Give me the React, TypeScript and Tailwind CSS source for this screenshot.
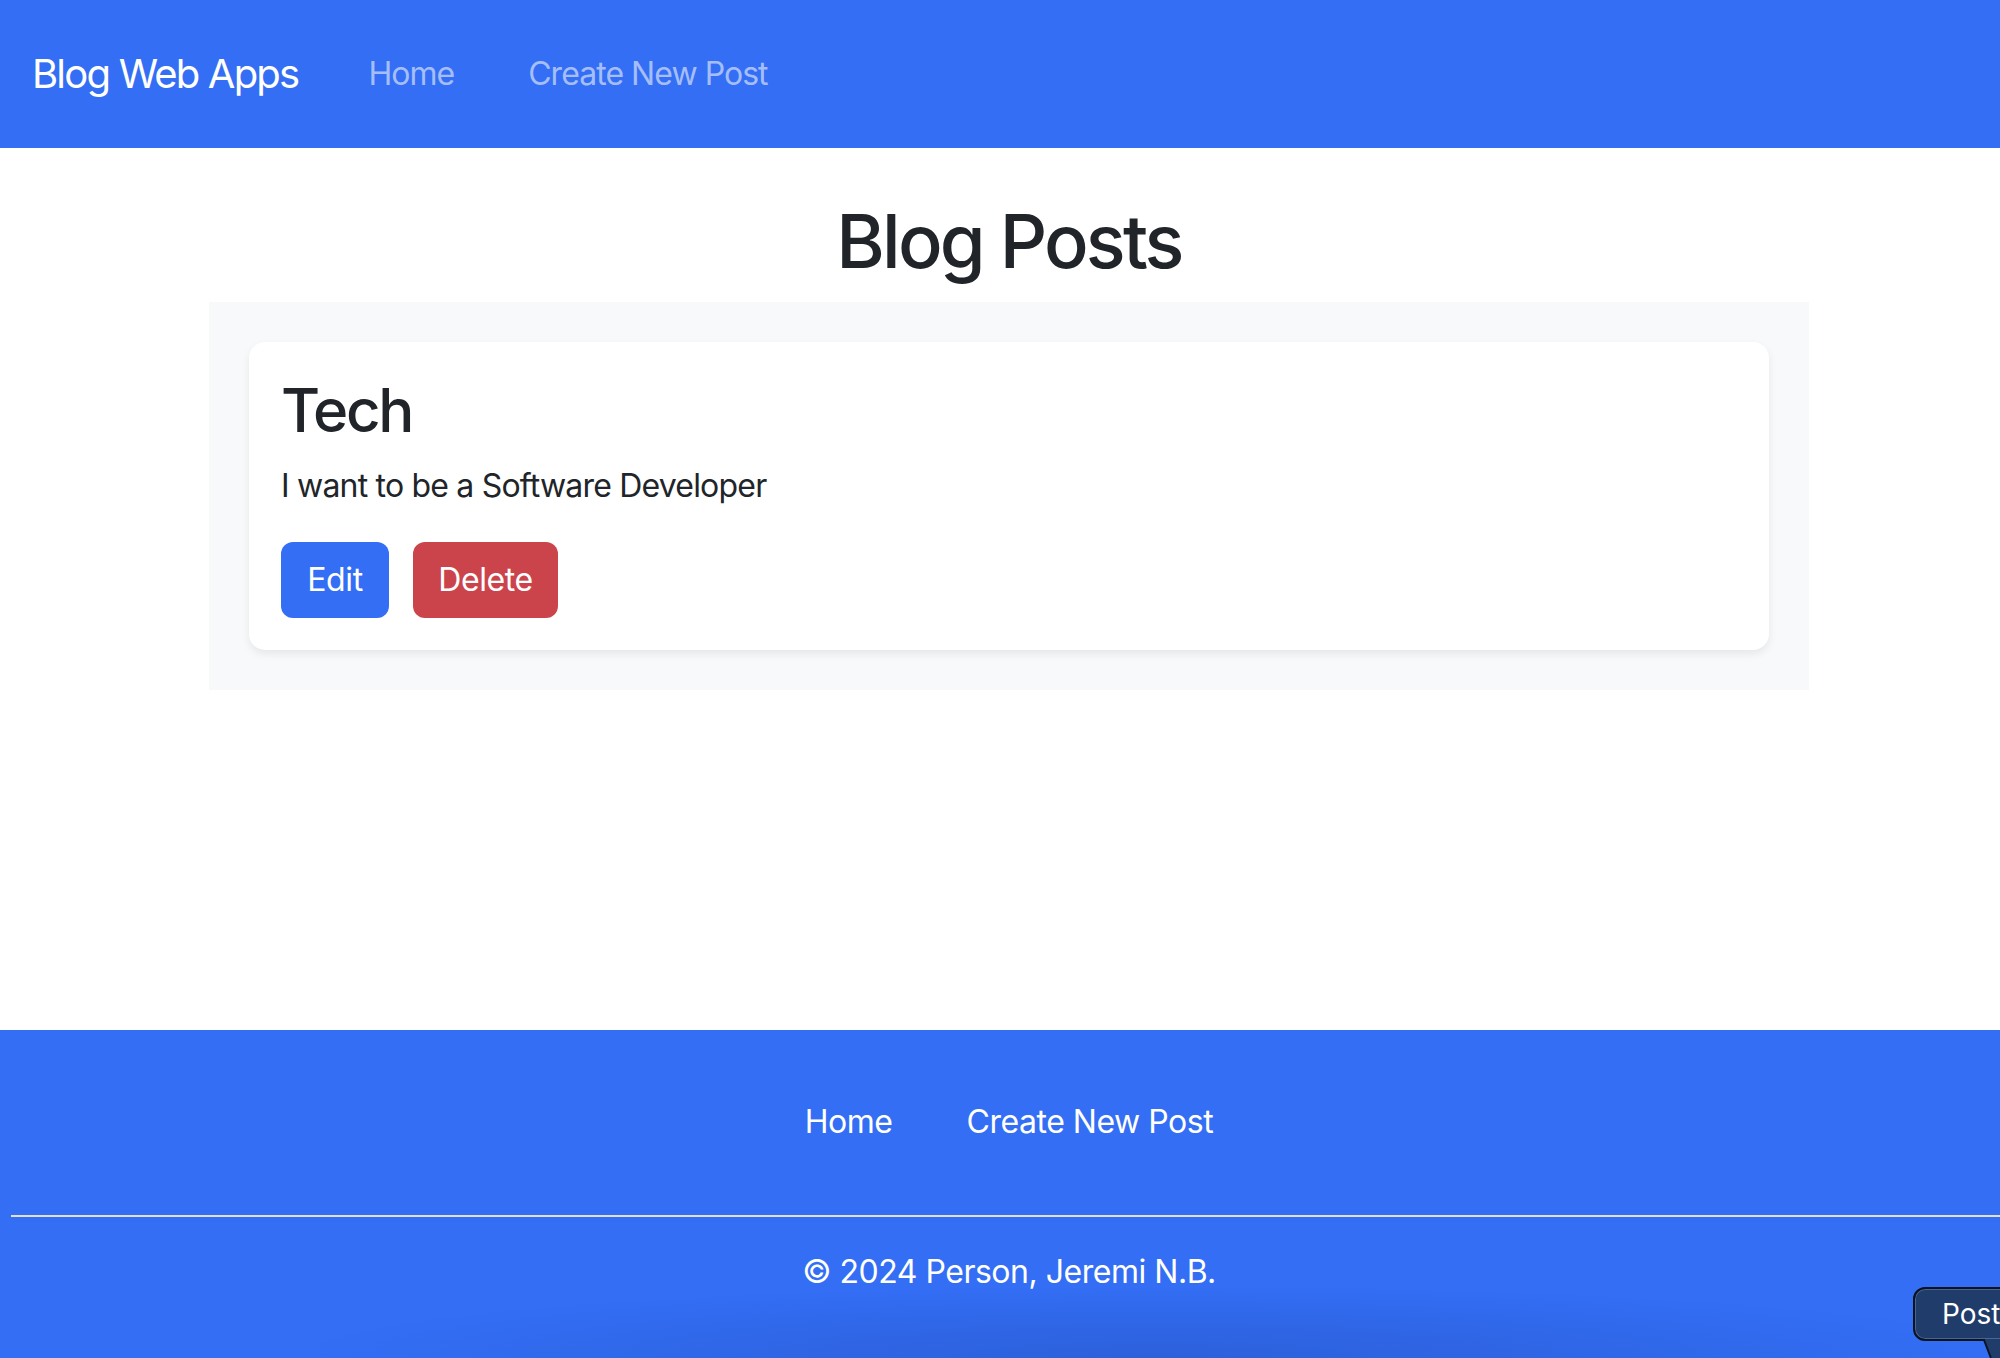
const FONT = "font-['Inter','Liberation_Sans',sans-serif]";

function Header() {
  return (
    <header className="flex h-[148px] items-center bg-[#336ef5] pl-[32px]">
      <a className="mr-[70px] text-[40px] tracking-[-0.045em] text-white">Blog Web Apps</a>
      <nav className="flex gap-[74px] text-[32px] tracking-[-0.03em] text-[#a5bef9]">
        <a>Home</a>
        <a>Create New Post</a>
      </nav>
    </header>
  );
}

function PostCard() {
  return (
    <div className="rounded-[16px] bg-white p-[32px] shadow-[0_4px_8px_rgba(0,0,0,0.075)]">
      <h2 className="mb-[16px] text-[60px] font-medium leading-[1.2] tracking-[-0.04em]">Tech</h2>
      <p className="mb-[32px] text-[32px] leading-[1.5] tracking-[-0.025em]">I want to be a Software Developer</p>
      <div className="flex gap-[24px] tracking-[-0.025em]">
        <button className="h-[76px] w-[108px] rounded-[12px] bg-[#336ef5] text-[32px] text-white">Edit</button>
        <button className="h-[76px] w-[145px] rounded-[12px] bg-[#cc444b] text-[32px] text-white">Delete</button>
      </div>
    </div>
  );
}

function Footer() {
  return (
    <footer className="overflow-hidden bg-[#336ef5] pt-[68px] pb-[62px] tracking-[-0.03em] text-white">
      <div className="ml-[11px] w-[1996px]">
        <ul className="flex justify-center gap-[74px] border-b-2 border-[#e0e0e0] pb-[69px] text-[32px] leading-[48px]">
          <li>Home</li>
          <li>Create New Post</li>
        </ul>
        <p className="mt-[31px] text-center text-[32px] leading-[48px]">© 2024 Person, Jeremi N.B.</p>
      </div>
    </footer>
  );
}

export default function App() {
  return (
    <div className={`relative flex min-h-screen flex-col overflow-hidden text-[#212529] ${FONT}`}>
      <Header />
      <main className="flex-1">
        <h1 className="mt-[49px] mb-[16px] pl-[18px] text-center text-[74px] font-medium leading-[1.2] tracking-[-0.038em]">
          Blog Posts
        </h1>
        <div className="ml-[209px] w-[1600px] bg-[#f8f9fa] p-[40px]">
          <PostCard />
        </div>
      </main>
      <Footer />

      {/* dock shadow along the bottom edge */}
      <div className="pointer-events-none absolute bottom-0 left-[320px] right-0 h-[70px] bg-[radial-gradient(ellipse_at_bottom,rgba(10,20,80,0.16),transparent_75%)]" />

      {/* tooltip bubble in the corner */}
      <div className="absolute left-[1913px] top-[1287px] h-[54px] w-[140px] rounded-[12px] border-2 border-[#0b1220] bg-[#1f3c6a] pl-[27px] text-[28px] leading-[50px] text-white shadow-[inset_0_0_0_1px_#4a6590]">
        Post
      </div>
      <svg className="absolute left-[1976px] top-[1339px]" width="24" height="19" viewBox="0 0 24 19">
        <path d="M0 0 L8 0 L16 19 L24 19 L24 0 Z" fill="#1f3c6a" />
        <path d="M0 1 L8 1 L15 19" fill="none" stroke="#0b1220" strokeWidth="2" />
      </svg>
    </div>
  );
}
